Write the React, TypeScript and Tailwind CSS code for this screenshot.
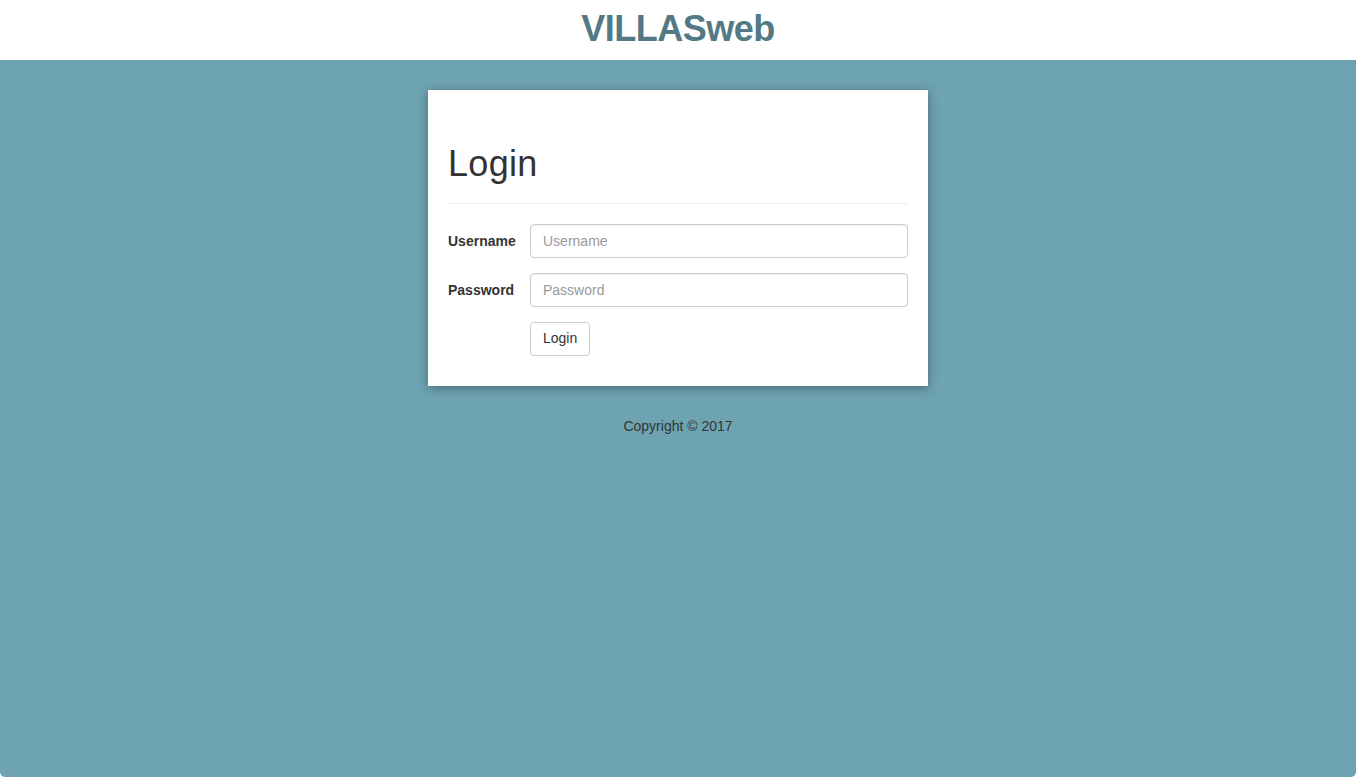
import React from "react";

export default function App() {
  return (
    <div
      className="flex h-[777px] flex-col bg-white text-[14px] text-[#333333]"
      style={{ fontFamily: '"Liberation Sans", Arial, sans-serif' }}
    >
      <header className="flex h-[60px] items-center justify-center">
        <h1 className="text-[36px] leading-none font-bold tracking-[-0.5px] text-[#527984] pb-[2px]">
          VILLASweb
        </h1>
      </header>
      <main className="flex flex-1 flex-col items-center rounded-b-[5px] bg-[#6ea3b1] pt-[30px]">
        <div className="w-[500px] bg-white px-[20px] pt-[20px] pb-[30px] shadow-[0_2px_10px_rgba(0,0,0,0.35)]">
          <div className="mb-[20px] border-b border-[#eeeeee] pb-[9px]">
            <h2 className="mt-[34px] mb-[10px] text-[36px] leading-[1.1] font-normal tracking-[0.3px] text-[#333333]">
              Login
            </h2>
          </div>
          <form className="flex flex-col gap-[15px]" onSubmit={(e) => e.preventDefault()}>
            <div className="flex items-center">
              <label className="w-[82px] shrink-0 pt-[1px] font-bold">Username</label>
              <input
                placeholder="Username"
                className="h-[34px] flex-1 rounded-[4px] border border-[#cccccc] px-[12px] text-[14px] placeholder:text-[#999999] shadow-[inset_0_1px_1px_rgba(0,0,0,0.075)] outline-none"
              />
            </div>
            <div className="flex items-center">
              <label className="w-[82px] shrink-0 pt-[1px] font-bold">Password</label>
              <input
                type="password"
                placeholder="Password"
                className="h-[34px] flex-1 rounded-[4px] border border-[#cccccc] px-[12px] text-[14px] placeholder:text-[#999999] shadow-[inset_0_1px_1px_rgba(0,0,0,0.075)] outline-none"
              />
            </div>
            <div className="flex pl-[82px]">
              <button
                type="submit"
                className="h-[34px] rounded-[4px] border border-[#cccccc] bg-white px-[12px] text-[14px] text-[#333333]"
              >
                Login
              </button>
            </div>
          </form>
        </div>
        <footer className="mt-[30px] text-[14px] text-[#333333]">Copyright © 2017</footer>
      </main>
    </div>
  );
}
